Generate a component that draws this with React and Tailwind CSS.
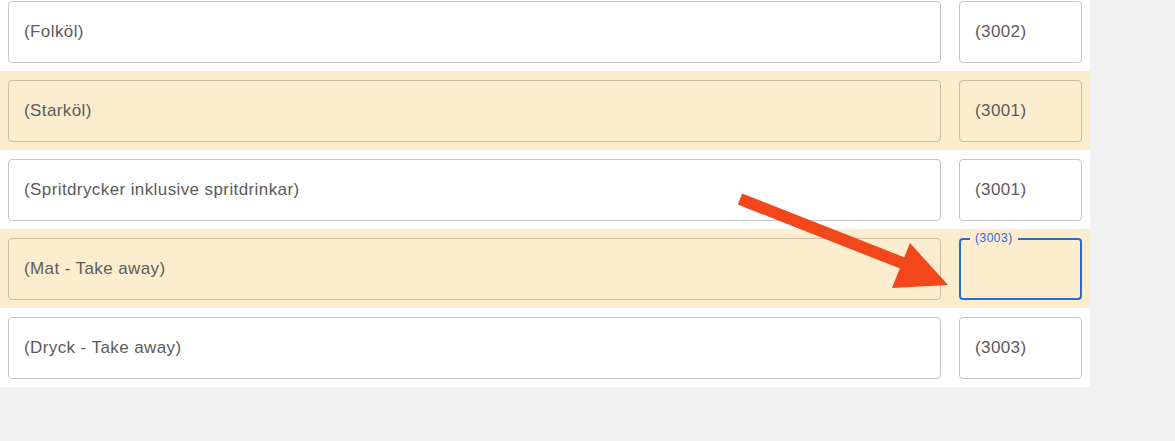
import React from "react";

const rows = [
  { name: "(Folköl)", code: "(3002)", cream: false },
  { name: "(Starköl)", code: "(3001)", cream: true },
  { name: "(Spritdrycker inklusive spritdrinkar)", code: "(3001)", cream: false },
  { name: "(Mat - Take away)", code: "(3003)", cream: true, focused: true },
  { name: "(Dryck - Take away)", code: "(3003)", cream: false },
];

export default function App() {
  return (
    <div
      className="relative w-[1175px] h-[441px] bg-[#f1f1f1] overflow-hidden"
      style={{ fontFamily: '"Liberation Sans", Arial, sans-serif' }}
    >
      <div className="w-[1090px] bg-white flex flex-col">
        {rows.map((r, i) => (
          <div
            key={i}
            className={`flex gap-[18px] px-[8px] pb-[8px] ${i === 0 ? "pt-[1px]" : "pt-[9px]"} ${
              r.cream ? "bg-[#fdedcf]" : "bg-white"
            }`}
          >
            <div
              className={`flex-1 h-[62px] rounded-[4px] border flex items-center pl-[15px] text-[17px] tracking-[0.4px] text-[#5b5b5b] ${
                r.cream ? "border-[#c9bda5] bg-[#fdedcf]" : "border-[#c6c6c6] bg-white"
              }`}
            >
              {r.name}
            </div>
            {r.focused ? (
              <div className="relative w-[123px] h-[62px] rounded-[4px] border-2 border-[#2b6bcf] bg-[#fdedcf]">
                <span className="absolute left-[9px] top-[-10px] px-[5px] bg-[#fdedcf] text-[12px] tracking-[0.5px] leading-[16px] text-[#2b6bcf]">
                  {r.code}
                </span>
              </div>
            ) : (
              <div
                className={`w-[123px] h-[62px] rounded-[4px] border flex items-center pl-[15px] text-[17px] tracking-[0.4px] text-[#5b5b5b] ${
                  r.cream ? "border-[#c9bda5] bg-[#fdedcf]" : "border-[#c6c6c6] bg-white"
                }`}
              >
                {r.code}
              </div>
            )}
          </div>
        ))}
      </div>
      <svg
        className="absolute left-0 top-0 pointer-events-none"
        width="1175"
        height="441"
        viewBox="0 0 1175 441"
      >
        <line x1="740" y1="199" x2="915" y2="268" stroke="#f2461b" strokeWidth="12" />
        <polygon points="910,243 892,288 948,285" fill="#f2461b" />
      </svg>
    </div>
  );
}
